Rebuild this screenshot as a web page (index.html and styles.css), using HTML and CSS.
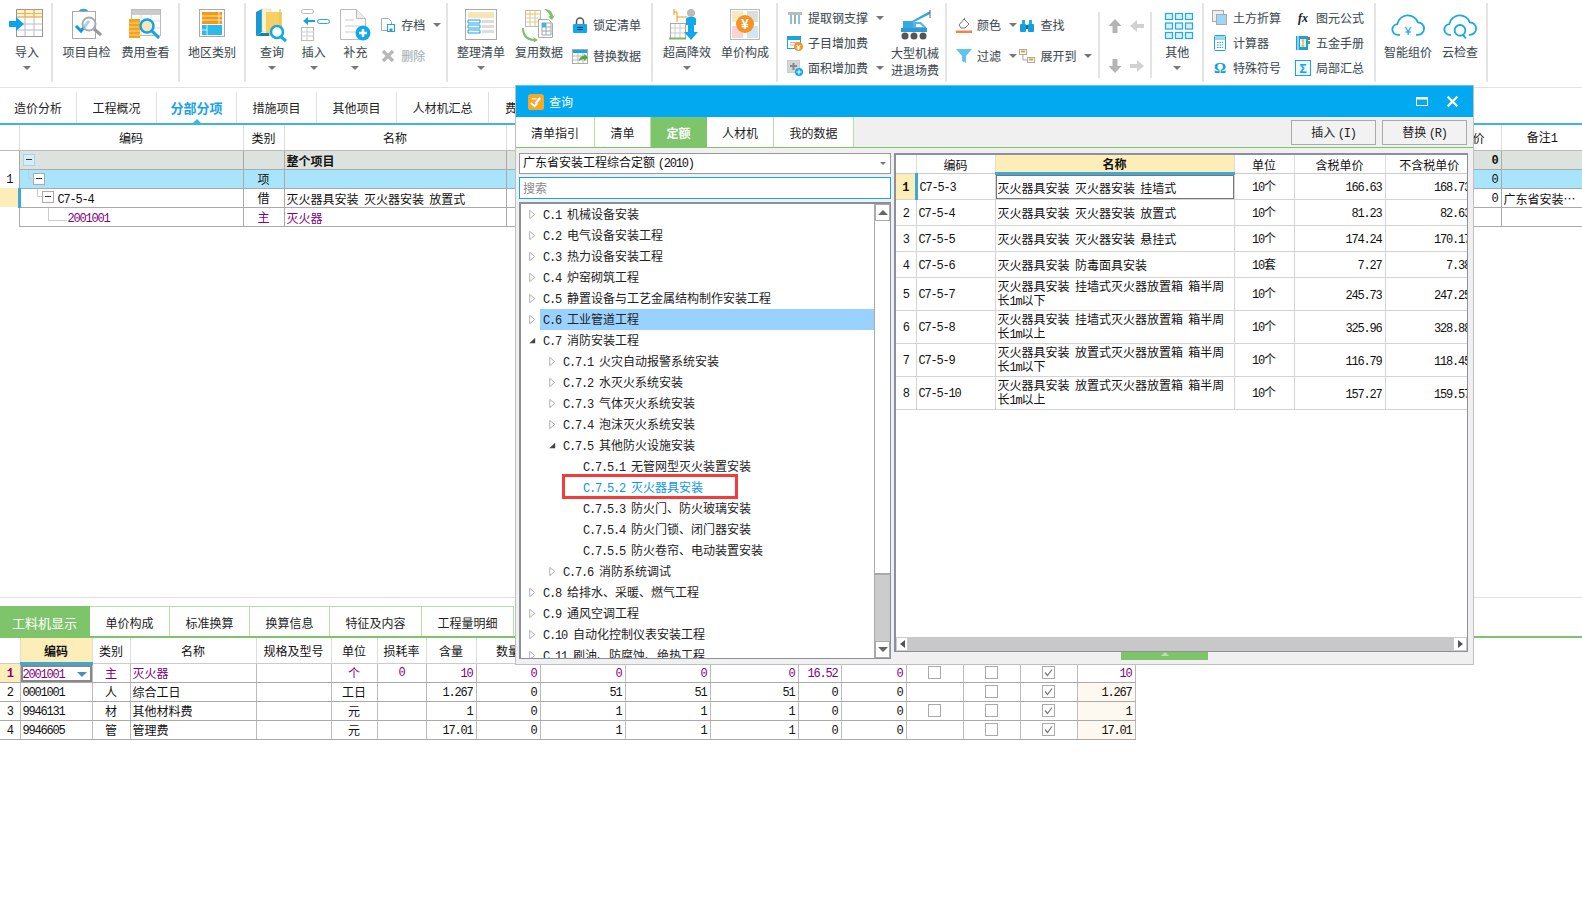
FILE: index.html
```html
<!DOCTYPE html>
<html lang="zh-CN">
<head>
<meta charset="utf-8">
<title>查询</title>
<link rel="stylesheet" href="styles.css">
</head>
<body>
<svg class="sprite" width="0" height="0">
  <symbol id="tri" viewBox="0 0 8 12"><path d="M1.500 1.500 7 6 1.500 10.500Z" fill="#fff" stroke="#aaa"/></symbol>
  <symbol id="open" viewBox="0 0 8 12"><path d="M7.500 3v6H1Z" fill="#444"/></symbol>
  <symbol id="chk" viewBox="0 0 13 13"><rect x=".5" y=".5" width="12" height="12" fill="#fff" stroke="#aaa"/><path d="M3 6.500 5.500 9.500 10 3.500" fill="none" stroke="#777" stroke-width="1.200"/></symbol>
  <symbol id="unchk" viewBox="0 0 13 13"><rect x=".5" y=".5" width="12" height="12" fill="#fff" stroke="#aaa"/></symbol>
</svg>

<header class="toolbar">
  <div class="group g1">
    <div class="big"><svg class="ico" viewBox="0 0 36 34"><rect x="7.500" y="1.500" width="26" height="27" fill="#fff" stroke="#999"/><path d="M8 2h25v7H8z" fill="#fff3cf"/><path d="M8 9h25M16 2v26M25 2v26M8 16h25M8 22h25" stroke="#bbb"/><path d="M8 5.500h25M16 2v7M25 2v7M8 9h25" stroke="#f5b642"/><path d="M0 13h7V9l8 7-8 7v-4H0z" fill="#0aa5ec"/></svg><span class="lb">导入</span><i class="caret"></i></div>
  </div>
  <div class="group g2">
    <div class="big"><svg class="ico" viewBox="0 0 36 34"><rect x="3.500" y="3.500" width="23" height="27" fill="#fff" stroke="#aaa"/><path d="M10 3c1-3 8-3 9 0z" fill="#25a9e6"/><path d="M7 18l5 5 8-10" fill="none" stroke="#0a9be0" stroke-width="3"/><circle cx="20" cy="16" r="6.500" fill="#fff" fill-opacity=".6" stroke="#aaa" stroke-width="2"/><path d="M25 21l7 6" stroke="#999" stroke-width="3"/></svg><span class="lb">项目自检</span></div>
    <div class="big"><svg class="ico" viewBox="0 0 36 34"><rect x="3.500" y="1.500" width="29" height="26" fill="#fff" stroke="#bbb"/><path d="M4 2h28v5H4z" fill="#ccc"/><path d="M4 13h28M4 20h28M13 7v20M23 7v20" stroke="#ddd"/><path d="M1 11h11v19H1z" fill="#f7a21d"/><path d="M1 15h11M1 19h11M1 23h11M1 27h11" stroke="#ffd48a"/><circle cx="19" cy="18" r="6.500" fill="#fde3b8" stroke="#0fa6e8" stroke-width="2.500"/><path d="M24 23l7 7" stroke="#0fa6e8" stroke-width="3"/></svg><span class="lb">费用查看</span></div>
  </div>
  <div class="group g3">
    <div class="big"><svg class="ico" viewBox="0 0 36 34"><rect x="5.500" y="1.500" width="25" height="27" fill="#fff" stroke="#aaa"/><path d="M8 4h20v12H8z" fill="#f79a0e"/><path d="M8 17h20v10H8z" fill="#2cbbe8"/><path d="M25 4v12M8 8h20M8 12h20" stroke="#fff" stroke-width=".800"/><path d="M13 17v10M8 22h5" stroke="#fff" stroke-width=".800"/></svg><span class="lb">地区类别</span></div>
  </div>
  <div class="group g4">
    <div class="big"><svg class="ico" viewBox="0 0 36 34"><path d="M2 4l6-3v23l-6 4z" fill="#1599d6"/><path d="M8 1h9v23H8z" fill="#fff3cc" stroke="#ccc" stroke-width=".500"/><path d="M12 4h16v24H12z" fill="#f7cf62"/><path d="M26 1v25" stroke="#eeb94b"/><path d="M2 28l5-3h8v3z" fill="#0d83bb"/><circle cx="23" cy="24" r="6" fill="#fff" stroke="#12a9ea" stroke-width="2.500"/><path d="M27 29l5 4" stroke="#12a9ea" stroke-width="3"/></svg><span class="lb">查询</span><i class="caret"></i></div>
    <div class="big"><svg class="ico" viewBox="0 0 36 34"><rect x="5.500" y="1.500" width="12" height="4" rx="2" fill="#fff" stroke="#bbb"/><rect x="21.500" y="11.500" width="12" height="4" rx="2" fill="#fff" stroke="#22ace6"/><path d="M19 12v2h-7v3l-5-4 5-4v3z" fill="#12a3e6"/><rect x="5.500" y="19.500" width="12" height="13" fill="#fff" stroke="#bbb"/><path d="M5 24h13M5 28h13M11 19v13" stroke="#ccc"/></svg><span class="lb">插入</span><i class="caret"></i></div>
    <div class="big"><svg class="ico" viewBox="0 0 36 34"><path d="M3.500 1.500h16l9 9v21h-25z" fill="#fff" stroke="#bbb"/><path d="M19.500 1.500v9h9" fill="#eee" stroke="#bbb"/><path d="M8 12h9M8 18h15M8 24h11" stroke="#ddd" stroke-width="1.500"/><circle cx="26" cy="25" r="7.500" fill="#0da9ee"/><path d="M22 25h8M26 21v8" stroke="#fff" stroke-width="2.500"/></svg><span class="lb">补充</span><i class="caret"></i></div>
    <div class="smcol">
      <div class="sm two"><svg class="sic" viewBox="0 0 16 16"><path d="M1.500 1.500h7l3 3v9h-10z" fill="#fff" stroke="#aaa"/><rect x="7.500" y="7.500" width="7" height="7" fill="#fff" stroke="#18a5e2"/><path d="M9.500 11.500h3v3h-3z" fill="#18a5e2"/></svg><span>存档</span><i class="caret side"></i></div>
      <div class="sm two off"><svg class="sic" viewBox="0 0 16 16"><path d="M3 3l10 10M13 3 3 13" stroke="#b8b8b8" stroke-width="3.500"/></svg><span>删除</span></div>
    </div>
  </div>
  <div class="group g5">
    <div class="big"><svg class="ico" viewBox="0 0 36 34"><rect x="2.500" y="1.500" width="31" height="30" fill="#fff" stroke="#aaa"/><path d="M5 4h26v6H5z" fill="#f4e6b6"/><path d="M5 12h12v3H5zM5 17h12v3H5zM5 22h12v3H5z" fill="#fff" stroke="#14a4e0"/><path d="M19 12h12v3H19zM19 17h12v3H19zM19 22h12v3H19z" fill="#ddd"/></svg><span class="lb">整理清单</span><i class="caret"></i></div>
    <div class="big"><svg class="ico" viewBox="0 0 36 34"><rect x="4.500" y="2.500" width="15" height="16" fill="#fff" stroke="#bbb"/><path d="M5 6h14M9 3v15M14 3v15" stroke="#f4bf52"/><path d="M5 10h14M5 14h14" stroke="#ccc"/><path d="M17.500 11.500h10l4 4v14h-14z" fill="#fff" stroke="#aaa"/><path d="M21 15h9v12h-9zM21 19h9M21 23h9M25 15v12" fill="none" stroke="#9aa"/><path d="M21 15h4v4h-4z" fill="#39b3e8"/><path d="M23 1c5 0 8 2 9 7l2-1-3 5-4-3 2-1c-1-3-3-5-6-7" fill="#7cc267"/><path d="M3 20c0 6 3 10 10 11l-1-2 5 3-5 3 1-2c-8 0-12-5-12-13z" fill="#7cc267"/></svg><span class="lb">复用数据</span></div>
    <div class="smcol">
      <div class="sm two"><svg class="sic" viewBox="0 0 16 16"><path d="M4.500 7V4.500a3.500 3.500 0 0 1 7 0V7" fill="none" stroke="#555" stroke-width="1.500"/><rect x="1" y="7" width="14" height="9" rx="1" fill="#0fa9ee"/><path d="M5 10.500h6M5 12.500h6" stroke="#135"/></svg><span>锁定清单</span></div>
      <div class="sm two"><svg class="sic" viewBox="0 0 16 16"><rect x=".5" y="1.500" width="15" height="14" fill="#fff" stroke="#aaa"/><path d="M1 2h14v3H1z" fill="#16a6e2"/><path d="M1 8h14M1 12h14M6 5v10M11 5v10" stroke="#bbb"/><path d="M7 13c0-3 2-5 5-5V6l4 3.500-4 3.500v-2c-2 0-4 1-5 2z" fill="#55a83a"/></svg><span>替换数据</span></div>
    </div>
  </div>
  <div class="group g6">
    <div class="big"><svg class="ico" viewBox="0 0 36 34"><rect x="1.500" y="15.500" width="15" height="15" fill="#fff" stroke="#aaa"/><path d="M2 20h14M2 25h14M6 16v14M11 16v14" stroke="#ccc"/><path d="M0 30.500h17" stroke="#7cb85f" stroke-width="2"/><path d="M8 4v10M5 4h3M5 1v6M8 9h10" stroke="#f29a12" fill="none"/><circle cx="22" cy="5" r="4" fill="#bbb"/><path d="M17 11c0-3 10-3 10 0v6h-10z" fill="#12a8ec"/><path d="M19 17h6v7h4l-7 8-7-8h4z" fill="#12a8ec"/></svg><span class="lb">超高降效</span><i class="caret"></i></div>
    <div class="big"><svg class="ico" viewBox="0 0 36 34"><rect x="3.500" y="1.500" width="29" height="30" fill="#fff" stroke="#bbb"/><path d="M5 3h11v11H5z" fill="#f5e9c0"/><path d="M20 3h11v11H20z" fill="#ddd"/><path d="M5 18h11v12H5z" fill="#f5d5d5"/><path d="M20 18h11v12H20z" fill="#cfe6f3"/><circle cx="18" cy="16" r="9" fill="#f7931e"/><text x="18" y="20.500" text-anchor="middle" class="yen">¥</text></svg><span class="lb">单价构成</span></div>
  </div>
  <div class="group g7">
    <div class="smcol three">
      <div class="sm"><svg class="sic" viewBox="0 0 16 16"><path d="M1 2h14v3H1z" fill="#bbb"/><path d="M3 5h2v9H3zM11 5h2v9h-2z" fill="#7ac6e6"/><path d="M7 5h2v9H7z" fill="#aaa"/></svg><span>提取钢支撑</span><i class="caret side"></i></div>
      <div class="sm"><svg class="sic" viewBox="0 0 16 16"><rect x=".5" y="1.500" width="13" height="12" fill="#fff" stroke="#18a5e2"/><path d="M1 2h12v3H1z" fill="#18a5e2"/><path d="M3 7.500h7M3 10h4" stroke="#bbb"/><circle cx="11.500" cy="11.500" r="4.500" fill="#f7931e"/><text x="11.500" y="14.500" text-anchor="middle" class="yen sm-y">¥</text></svg><span>子目增加费</span></div>
      <div class="sm"><svg class="sic" viewBox="0 0 16 16"><rect x=".5" y=".5" width="12" height="12" fill="#d6d6d6" stroke="#ccc"/><path d="M3 6h7M6.500 3v7" stroke="#888" stroke-width="2"/><circle cx="12" cy="12" r="4" fill="#0da9ee"/><path d="M9.500 12h5M12 9.500v5" stroke="#fff"/></svg><span>面积增加费</span><i class="caret side"></i></div>
    </div>
    <div class="big"><svg class="ico" viewBox="0 0 36 34"><path d="M15 13 33 3v3L17 14z" fill="#2aa8e4"/><path d="M33 2v8" stroke="#666"/><path d="M6 13h10v7H6z" fill="#38a8e2"/><path d="M16 14h8l5 5v5H16z" fill="#58b4e8"/><path d="M19 16h4l3 3h-7z" fill="#fff"/><path d="M4 20h26v4H4z" fill="#2a9ad8"/><circle cx="8" cy="28" r="3.500" fill="#555"/><circle cx="17" cy="28" r="3.500" fill="#555"/><circle cx="26" cy="28" r="3.500" fill="#555"/></svg><span class="lb two-l">大型机械<br>进退场费</span></div>
  </div>
  <div class="group g8">
    <div class="smcol c1">
      <div class="sm two"><svg class="sic" viewBox="0 0 16 16"><path d="M3 8l5-6 5 5-4 4H5z" fill="#fff" stroke="#777"/><path d="M7 3l2-2" stroke="#777"/><path d="M0 13.500h16v2.500H0z" fill="#f4824a"/></svg><span>颜色</span><i class="caret side"></i></div>
      <div class="sm two"><svg class="sic" viewBox="0 0 16 16"><path d="M0 1h16L10 8v7l-4-2V8z" fill="#62c3ee"/></svg><span>过滤</span><i class="caret side"></i></div>
    </div>
    <div class="smcol c2">
      <div class="sm two"><svg class="sic" viewBox="0 0 16 16"><path d="M3 3h3v4H3zM10 3h3v4h-3z" fill="#2aa8e4"/><rect x="1" y="7" width="6" height="8" rx="1" fill="#12a0e0"/><rect x="9" y="7" width="6" height="8" rx="1" fill="#12a0e0"/><path d="M7 8h2v4H7z" fill="#0a6fa8"/></svg><span>查找</span></div>
      <div class="sm two"><svg class="sic" viewBox="0 0 16 16"><rect x=".5" y="1.500" width="7" height="5" fill="#fff" stroke="#aaa"/><rect x="8.500" y="9.500" width="7" height="5" fill="#fff" stroke="#aaa"/><path d="M2 3.500h4M10 11.500h4" stroke="#f29a12" stroke-width="2"/><path d="M4 7v5h4" fill="none" stroke="#aaa"/></svg><span>展开到</span><i class="caret side"></i></div>
    </div>
    <div class="arrows">
      <svg class="ar" viewBox="0 0 16 16"><path d="M8 1l6.500 7H10.500v7h-5V8H1.500z" fill="#b4b4b4"/></svg>
      <svg class="ar" viewBox="0 0 16 16"><path d="M1 8l7-6v4h7v4H8v4z" fill="#d2d2d2"/></svg>
      <svg class="ar" viewBox="0 0 16 16"><path d="M8 15l6.500-7H10.500V1h-5v7H1.500z" fill="#b4b4b4"/></svg>
      <svg class="ar" viewBox="0 0 16 16"><path d="M15 8 8 2v4H1v4h7v4z" fill="#d2d2d2"/></svg>
    </div>
    <div class="big"><svg class="ico" viewBox="-2 -1 36 34"><g fill="#d7f0fb" stroke="#1fa9e6" stroke-width="1.200"><rect x="4.500" y="4.500" width="7" height="6"/><rect x="14.500" y="4.500" width="7" height="6"/><rect x="24.500" y="4.500" width="7" height="6"/><rect x="4.500" y="14" width="7" height="6"/><rect x="14.500" y="14" width="7" height="6"/><rect x="24.500" y="14" width="7" height="6"/><rect x="4.500" y="23.500" width="7" height="6"/><rect x="14.500" y="23.500" width="7" height="6"/><rect x="24.500" y="23.500" width="7" height="6"/></g></svg><span class="lb">其他</span><i class="caret"></i></div>
  </div>
  <div class="group g9">
    <div class="smcol three c3">
      <div class="sm"><svg class="sic" viewBox="0 0 16 16"><rect x=".5" y=".5" width="11" height="11" fill="#eee" stroke="#aaa"/><rect x="4.500" y="4.500" width="10" height="10" fill="#9bd6f2" stroke="#aaa"/></svg><span>土方折算</span></div>
      <div class="sm"><svg class="sic" viewBox="0 0 16 16"><rect x="2.500" y=".5" width="11" height="15" rx="1" fill="#fff" stroke="#18a5e2"/><path d="M3 1h10v4H3z" fill="#9bd6f2"/><path d="M5 7.500h6M5 10h6M5 12.500h6" stroke="#18a5e2" stroke-dasharray="1.500 1"/></svg><span>计算器</span></div>
      <div class="sm"><svg class="sic" viewBox="0 0 16 16"><text x="8" y="13" text-anchor="middle" class="omega">Ω</text></svg><span>特殊符号</span></div>
    </div>
    <div class="smcol three c4">
      <div class="sm"><svg class="sic" viewBox="0 0 16 16"><text x="8" y="12" text-anchor="middle" class="fx">fx</text></svg><span>图元公式</span></div>
      <div class="sm"><svg class="sic" viewBox="0 0 16 16"><rect x="1" y="1" width="12" height="14" fill="#1aa2e0"/><path d="M3 1v14" stroke="#fff"/><path d="M5 4h6v8H5z" fill="#e9f6fc"/><path d="M6.500 5h3M8 5v6M6.500 11h3" stroke="#e8a400"/><path d="M13 2h2v3h-2z" fill="#e8443a"/><path d="M13 6h2v3h-2z" fill="#4caf50"/></svg><span>五金手册</span></div>
      <div class="sm"><svg class="sic" viewBox="0 0 16 16"><rect x=".5" y=".5" width="15" height="15" fill="#eef8fd" stroke="#18a5e2"/><text x="8" y="12.500" text-anchor="middle" class="sigma">Σ</text></svg><span>局部汇总</span></div>
    </div>
  </div>
  <div class="group g10">
    <div class="big"><svg class="ico" viewBox="-2 -5 40 38"><path d="M9 25H7A6 6 0 0 1 6 13 12 12 0 0 1 29 11a7 7 0 0 1 0 14h-2" fill="none" stroke="#19a8e6" stroke-width="2"/><text x="18" y="25" text-anchor="middle" class="cloud-y">¥</text></svg><span class="lb">智能组价</span></div>
    <div class="big"><svg class="ico" viewBox="-2 -5 40 38"><path d="M8 25H7A6 6 0 0 1 6 13 12 12 0 0 1 29 11a7 7 0 0 1 0 14h-1" fill="none" stroke="#19a8e6" stroke-width="2"/><circle cx="18" cy="20" r="6" fill="#fff" stroke="#19a8e6" stroke-width="2"/><path d="M21.500 25l3 4" stroke="#19a8e6" stroke-width="2"/></svg><span class="lb">云检查</span></div>
  </div>
</header>

<nav class="tabs">
  <a class="tab t-first">造价分析</a>
  <a class="tab">工程概况</a>
  <a class="tab on">分部分项</a>
  <a class="tab">措施项目</a>
  <a class="tab">其他项目</a>
  <a class="tab t-wide">人材机汇总</a>
  <a class="tab t-last">费用汇总</a>
</nav>

<section class="main">
  <table class="grid mt">
    <colgroup><col><col><col><col><col><col><col></colgroup>
    <thead>
      <tr><th></th><th>编码</th><th>类别</th><th>名称</th><th></th><th>综合合价</th><th>备注<span class="n">1</span></th></tr>
    </thead>
    <tbody>
      <tr class="r-all"><td class="rn plain"></td><td><span class="box b0"></span></td><td></td><td><b>整个项目</b></td><td></td><td class="num"><b>0</b></td><td></td></tr>
      <tr class="r-sel"><td class="rn plain"><span class="n">1</span></td><td><span class="box b1"></span></td><td class="ce">项</td><td></td><td></td><td class="num">0</td><td></td></tr>
      <tr><td class="rn plain act"></td><td class="cur"><span class="box b2"></span><span class="n">C7-5-4</span></td><td class="ce">借</td><td>灭火器具安装&nbsp;&nbsp;灭火器安装&nbsp;&nbsp;放置式</td><td></td><td class="num">0</td><td>广东省安装…</td></tr>
      <tr class="pu"><td class="rn plain"></td><td><span class="leaf n">2001001</span></td><td class="ce">主</td><td>灭火器</td><td></td><td></td><td></td></tr>
    </tbody>
  </table>
</section>

<section class="lower">
  <nav class="subtabs">
    <a class="st on st-a">工料机显示</a>
    <a class="st">单价构成</a>
    <a class="st">标准换算</a>
    <a class="st">换算信息</a>
    <a class="st st-b">特征及内容</a>
    <a class="st st-b">工程量明细</a>
  </nav>
  <table class="grid bt">
    <colgroup><col><col><col><col><col><col><col><col><col><col><col><col><col><col><col><col><col><col></colgroup>
    <thead>
      <tr><th></th><th class="hl">编码</th><th>类别</th><th>名称</th><th>规格及型号</th><th>单位</th><th>损耗率</th><th>含量</th><th>数量</th><th></th><th></th><th></th><th></th><th></th><th></th><th></th><th></th><th></th></tr>
    </thead>
    <tbody>
      <tr class="pu"><td class="rn act"><b class="n">1</b></td><td class="cellsel"><span class="n">2001001</span><i class="dd"></i></td><td class="ce">主</td><td>灭火器</td><td></td><td class="ce">个</td><td class="ce n">0</td><td class="num">10</td><td class="num">0</td><td class="num">0</td><td class="num">0</td><td class="num">0</td><td class="num">16.52</td><td class="num">0</td><td class="ce"><svg class="cb"><use href="#unchk"/></svg></td><td class="ce"><svg class="cb"><use href="#unchk"/></svg></td><td class="ce"><svg class="cb"><use href="#chk"/></svg></td><td class="num">10</td></tr>
      <tr><td class="rn"><span class="n">2</span></td><td><span class="n">0001001</span></td><td class="ce">人</td><td>综合工日</td><td></td><td class="ce">工日</td><td></td><td class="num">1.267</td><td class="num">0</td><td class="num">51</td><td class="num">51</td><td class="num">51</td><td class="num">0</td><td class="num">0</td><td></td><td class="ce"><svg class="cb"><use href="#unchk"/></svg></td><td class="ce"><svg class="cb"><use href="#chk"/></svg></td><td class="num tint">1.267</td></tr>
      <tr><td class="rn"><span class="n">3</span></td><td><span class="n">9946131</span></td><td class="ce">材</td><td>其他材料费</td><td></td><td class="ce">元</td><td></td><td class="num">1</td><td class="num">0</td><td class="num">1</td><td class="num">1</td><td class="num">1</td><td class="num">0</td><td class="num">0</td><td class="ce"><svg class="cb"><use href="#unchk"/></svg></td><td class="ce"><svg class="cb"><use href="#unchk"/></svg></td><td class="ce"><svg class="cb"><use href="#chk"/></svg></td><td class="num tint">1</td></tr>
      <tr><td class="rn"><span class="n">4</span></td><td><span class="n">9946605</span></td><td class="ce">管</td><td>管理费</td><td></td><td class="ce">元</td><td></td><td class="num">17.01</td><td class="num">0</td><td class="num">1</td><td class="num">1</td><td class="num">1</td><td class="num">0</td><td class="num">0</td><td></td><td class="ce"><svg class="cb"><use href="#unchk"/></svg></td><td class="ce"><svg class="cb"><use href="#chk"/></svg></td><td class="num tint">17.01</td></tr>
    </tbody>
  </table>
</section>

<aside class="dialog">
  <div class="dlg-head">
    <svg class="dlg-ico" viewBox="0 0 17 17"><rect width="17" height="17" rx="3" fill="#f7a826"/><path d="M3 9.500l4 3.500 3-3" fill="none" stroke="#fff" stroke-width="2"/><path d="M8 10l5-6" stroke="#fff" stroke-width="2.500"/><path d="M4 5h5" stroke="#fff" stroke-width="1.500"/></svg>
    <span class="dlg-title">查询</span>
    <svg class="dlg-btn" viewBox="0 0 12 12"><rect x=".5" y="1.500" width="11" height="8" fill="none" stroke="#fff"/><path d="M1 2.500h10" stroke="#fff" stroke-width="2"/></svg>
    <svg class="dlg-btn close" viewBox="0 0 12 12"><path d="M1.500 1.500l9 9M10.500 1.500l-9 9" stroke="#fff" stroke-width="2"/></svg>
  </div>
  <div class="dlg-tabs">
    <a class="dt w79">清单指引</a>
    <a class="dt w56">清单</a>
    <a class="dt w57 on">定额</a>
    <a class="dt w67">人材机</a>
    <a class="dt w80">我的数据</a>
    <button class="dbtn b-ins">插入 <span class="n">(I)</span></button>
    <button class="dbtn">替换 <span class="n">(R)</span></button>
  </div>
  <div class="dlg-body">
    <div class="leftcol">
      <div class="combo"><span>广东省安装工程综合定额 <span class="n">(2010)</span></span><i class="caret"></i></div>
      <div class="search">搜索</div>
      <div class="treebox">
        <ul class="tree">
          <li class="l0"><svg class="ar8"><use href="#tri"/></svg><span class="lab"><span class="n">C.1</span><em>机械设备安装</em></span></li>
          <li class="l0"><svg class="ar8"><use href="#tri"/></svg><span class="lab"><span class="n">C.2</span><em>电气设备安装工程</em></span></li>
          <li class="l0"><svg class="ar8"><use href="#tri"/></svg><span class="lab"><span class="n">C.3</span><em>热力设备安装工程</em></span></li>
          <li class="l0"><svg class="ar8"><use href="#tri"/></svg><span class="lab"><span class="n">C.4</span><em>炉窑砌筑工程</em></span></li>
          <li class="l0"><svg class="ar8"><use href="#tri"/></svg><span class="lab"><span class="n">C.5</span><em>静置设备与工艺金属结构制作安装工程</em></span></li>
          <li class="l0"><svg class="ar8"><use href="#tri"/></svg><span class="lab hi"><span class="n">C.6</span><em>工业管道工程</em></span></li>
          <li class="l0"><svg class="ar8"><use href="#open"/></svg><span class="lab"><span class="n">C.7</span><em>消防安装工程</em></span></li>
          <li class="l1"><svg class="ar8"><use href="#tri"/></svg><span class="lab"><span class="n">C.7.1</span><em>火灾自动报警系统安装</em></span></li>
          <li class="l1"><svg class="ar8"><use href="#tri"/></svg><span class="lab"><span class="n">C.7.2</span><em>水灭火系统安装</em></span></li>
          <li class="l1"><svg class="ar8"><use href="#tri"/></svg><span class="lab"><span class="n">C.7.3</span><em>气体灭火系统安装</em></span></li>
          <li class="l1"><svg class="ar8"><use href="#tri"/></svg><span class="lab"><span class="n">C.7.4</span><em>泡沫灭火系统安装</em></span></li>
          <li class="l1"><svg class="ar8"><use href="#open"/></svg><span class="lab"><span class="n">C.7.5</span><em>其他防火设施安装</em></span></li>
          <li class="l2"><span class="ar8"></span><span class="lab"><span class="n">C.7.5.1</span><em>无管网型灭火装置安装</em></span></li>
          <li class="l2 picked"><span class="ar8"></span><span class="lab"><span class="n">C.7.5.2</span><em>灭火器具安装</em></span><i class="redbox"></i></li>
          <li class="l2"><span class="ar8"></span><span class="lab"><span class="n">C.7.5.3</span><em>防火门、防火玻璃安装</em></span></li>
          <li class="l2"><span class="ar8"></span><span class="lab"><span class="n">C.7.5.4</span><em>防火门锁、闭门器安装</em></span></li>
          <li class="l2"><span class="ar8"></span><span class="lab"><span class="n">C.7.5.5</span><em>防火卷帘、电动装置安装</em></span></li>
          <li class="l1"><svg class="ar8"><use href="#tri"/></svg><span class="lab"><span class="n">C.7.6</span><em>消防系统调试</em></span></li>
          <li class="l0"><svg class="ar8"><use href="#tri"/></svg><span class="lab"><span class="n">C.8</span><em>给排水、采暖、燃气工程</em></span></li>
          <li class="l0"><svg class="ar8"><use href="#tri"/></svg><span class="lab"><span class="n">C.9</span><em>通风空调工程</em></span></li>
          <li class="l0"><svg class="ar8"><use href="#tri"/></svg><span class="lab"><span class="n">C.10</span><em>自动化控制仪表安装工程</em></span></li>
          <li class="l0"><svg class="ar8"><use href="#tri"/></svg><span class="lab"><span class="n">C.11</span><em>刷油、防腐蚀、绝热工程</em></span></li>
        </ul>
        <div class="vbar">
          <span class="sbtn"><i class="up"></i></span>
          <span class="thumb"></span>
          <span class="track"></span>
          <span class="sbtn"><i class="down"></i></span>
        </div>
      </div>
    </div>
    <div class="rightcol">
      <div class="qbox">
        <div class="qscroll">
          <table class="grid qt">
            <colgroup><col><col><col><col><col><col></colgroup>
            <thead><tr><th></th><th>编码</th><th class="hl">名称</th><th>单位</th><th>含税单价</th><th>不含税单价</th></tr></thead>
            <tbody>
              <tr><td class="rn act"><b class="n">1</b></td><td class="cur"><span class="n">C7-5-3</span></td><td class="cellsel2">灭火器具安装&nbsp;&nbsp;灭火器安装&nbsp;&nbsp;挂墙式</td><td class="ce"><span class="n">10</span>个</td><td class="num">166.63</td><td class="num">168.73</td></tr>
              <tr><td class="rn"><span class="n">2</span></td><td><span class="n">C7-5-4</span></td><td>灭火器具安装&nbsp;&nbsp;灭火器安装&nbsp;&nbsp;放置式</td><td class="ce"><span class="n">10</span>个</td><td class="num">81.23</td><td class="num">82.63</td></tr>
              <tr><td class="rn"><span class="n">3</span></td><td><span class="n">C7-5-5</span></td><td>灭火器具安装&nbsp;&nbsp;灭火器安装&nbsp;&nbsp;悬挂式</td><td class="ce"><span class="n">10</span>个</td><td class="num">174.24</td><td class="num">170.17</td></tr>
              <tr><td class="rn"><span class="n">4</span></td><td><span class="n">C7-5-6</span></td><td>灭火器具安装&nbsp;&nbsp;防毒面具安装</td><td class="ce"><span class="n">10</span>套</td><td class="num">7.27</td><td class="num">7.38</td></tr>
              <tr class="tall"><td class="rn"><span class="n">5</span></td><td><span class="n">C7-5-7</span></td><td>灭火器具安装&nbsp;&nbsp;挂墙式灭火器放置箱&nbsp;&nbsp;箱半周<br>长<span class="n">1m</span>以下</td><td class="ce"><span class="n">10</span>个</td><td class="num">245.73</td><td class="num">247.25</td></tr>
              <tr class="tall"><td class="rn"><span class="n">6</span></td><td><span class="n">C7-5-8</span></td><td>灭火器具安装&nbsp;&nbsp;挂墙式灭火器放置箱&nbsp;&nbsp;箱半周<br>长<span class="n">1m</span>以上</td><td class="ce"><span class="n">10</span>个</td><td class="num">325.96</td><td class="num">328.88</td></tr>
              <tr class="tall"><td class="rn"><span class="n">7</span></td><td><span class="n">C7-5-9</span></td><td>灭火器具安装&nbsp;&nbsp;放置式灭火器放置箱&nbsp;&nbsp;箱半周<br>长<span class="n">1m</span>以下</td><td class="ce"><span class="n">10</span>个</td><td class="num">116.79</td><td class="num">118.45</td></tr>
              <tr class="tall"><td class="rn"><span class="n">8</span></td><td><span class="n">C7-5-10</span></td><td>灭火器具安装&nbsp;&nbsp;放置式灭火器放置箱&nbsp;&nbsp;箱半周<br>长<span class="n">1m</span>以上</td><td class="ce"><span class="n">10</span>个</td><td class="num">157.27</td><td class="num">159.57</td></tr>
            </tbody>
          </table>
        </div>
        <div class="hbar">
          <span class="hbtn"><i class="lf"></i></span>
          <span class="htrack"></span>
          <span class="hbtn"><i class="rt"></i></span>
        </div>
      </div>
      <div class="grip"><i></i></div>
    </div>
  </div>
</aside>
</body>
</html>
```

FILE: styles.css
```css
*{box-sizing:border-box}
html,body{margin:0;padding:0}
body{width:1582px;height:923px;overflow:hidden;background:#fff;color:#111;font:12px/16px "Noto Sans CJK SC","Liberation Sans",sans-serif;position:relative}
.sprite{position:absolute}
.n{font-family:"Liberation Mono","Noto Sans CJK SC",monospace;letter-spacing:-1.2px;font-size:12px}
em{font-style:normal}
a{display:block}

/* ribbon */
.toolbar{display:flex;height:88px;border-bottom:1px solid #e2e2e2;padding-top:3px;color:#4a4a4a}
.group{display:flex;height:79px;border-right:2px solid #e4e4e4;text-shadow:0 0 1px rgba(110,180,225,.35)}
.g1{width:53px;padding-left:3px}
.g1 .big{width:50px}
.g2{width:127px;padding-left:4px}
.g2 .big{width:59px}
.g3{width:66px}
.g3 .big{width:66px}
.g4{width:202px;padding-left:5px}
.g4 .big{width:42px}
.g4 .smcol{margin-left:4px;width:66px}
.g5{width:205px;padding-left:4px}
.g5 .big{width:58px}
.g5 .smcol{margin-left:4px}
.g6{width:125px;padding-left:5px}
.g6 .big{width:58px}
.g7{width:169px;padding-left:9px}
.g7 .smcol{width:98px}
.g7 .big{width:60px}
.g8{width:257px;padding-left:9px}
.c1{width:64px}
.c2{width:79px}
.g8 .big{width:50px}
.g9{width:172px;padding-left:8px}
.c3{width:83px}
.c4{width:70px}
.g10{width:112px;padding-left:6px}
.g10 .big{width:53px}
.big{display:flex;flex-direction:column;align-items:center;padding-top:5px}
.ico{width:36px;height:34px;display:block}
.lb{margin-top:2px;white-space:nowrap;line-height:16px}
.two-l{line-height:17px}
.caret{display:block;width:0;height:0;border-left:4px solid transparent;border-right:4px solid transparent;border-top:4px solid #777;margin-top:6px}
.caret.side{margin:0 0 0 3px}
.smcol{display:flex;flex-direction:column;padding-top:6px}
.smcol.three{padding-top:2px}
.sm{display:flex;align-items:center;gap:5px;height:25px;white-space:nowrap}
.sm.two{height:31px}
.off{color:#b0b0b0}
.sic{width:16px;height:16px;flex:none;overflow:visible}
.arrows{width:55px;border-left:2px solid #e4e4e4;border-right:2px solid #e4e4e4;height:66px;margin-top:9px;display:grid;grid-template-columns:1fr 1fr;align-content:space-between;justify-items:center;padding:6px 2px 4px 4px}
.ar{width:16px;height:16px}
.yen{font:bold 14px "Liberation Sans",sans-serif;fill:#fff}
.sm-y{font-size:8px}
.omega{font:bold 15px "Liberation Serif",serif;fill:#0f9fe0}
.fx{font:italic bold 12px "Liberation Serif",serif;fill:#222}
.sigma{font:bold 12px "Liberation Sans",sans-serif;fill:#18a5e2}
.cloud-y{font:13px "Liberation Sans",sans-serif;fill:#19a8e6}

/* sheet tabs */
.tabs{display:flex;height:37px;padding-top:4px;border-bottom:2px solid #3db5e4;overflow:hidden}
.tab{width:80px;height:31px;line-height:32px;text-align:center;border-right:1px solid #e0e0e0;color:#222;flex:none}
.t-first{width:77px}
.t-wide{width:92px}
.t-last{width:80px;border-right:0}
.tab.on{color:#18a3ea;font-weight:bold;font-size:13px;position:relative}
.tab.on::after{content:"";position:absolute;left:50%;bottom:0;margin-left:-4px;border:4px solid transparent;border-top:0;border-bottom:4px solid #3db5e4}

/* grids */
.grid{border-collapse:collapse;table-layout:fixed;background:#fff}
.grid th{font-weight:normal;text-align:center;padding:2px 0 0;overflow:hidden;white-space:nowrap}
.grid td{padding:0 2px;overflow:hidden;white-space:nowrap}
.grid td.num{padding-top:3px}
.num{text-align:right;font-family:"Liberation Mono","Noto Sans CJK SC",monospace;letter-spacing:-1.2px;padding-right:3px!important}
.ce{text-align:center;padding:0!important}
.rn{text-align:center;padding:0!important}
.act{background:#fdedb8}
.pu td{color:#800080}
.hl{background:#fdedb8;font-weight:bold!important;border-bottom:3px solid #3da9d8!important}

/* main */
.main{height:472px}
.mt{width:1582px}
.mt col:nth-child(1){width:19px}
.mt col:nth-child(2){width:224px}
.mt col:nth-child(3){width:41px}
.mt col:nth-child(4){width:222px}
.mt col:nth-child(5){width:914px}
.mt col:nth-child(6){width:81px}
.mt col:nth-child(7){width:81px}
.mt th{height:25px;border-left:1px solid #ddd;border-bottom:1px solid #bbb}
.mt th:first-child{border-left:0}
.mt td{height:19px;border:1px solid #aaa;line-height:14px;padding-top:2px}
.mt td.plain{border:0}
.mt td:last-child{border-right:0}
.r-all td:not(.plain){background:#dce2dd}
.r-sel td:not(.plain){background:#a9e5fa}
.cur{border-left:3px solid #3da9d8!important}
.box{display:inline-block;position:relative;width:12px;height:12px;border:1px solid #aaa;background:#fff;vertical-align:top}
.box::after{content:"";position:absolute;left:2px;top:4px;width:6px;height:1px;background:#333}
.b0{margin-left:1px;background:#d5eef8;border-color:#a8d4e4}
.b1{margin-left:11px}
.b1::before,.b2::before{content:"";position:absolute;left:-6px;top:-10px;width:6px;height:14px;border-left:1px solid #ccc;border-bottom:1px solid #ccc}
.b2{margin:0 4px 0 19px}
.leaf{display:inline-block;position:relative;margin-left:46px}
.leaf::before{content:"";position:absolute;left:-20px;top:-8px;width:18px;height:16px;border-left:1px solid #ccc;border-bottom:1px solid #ccc}

/* lower */
.lower::before{content:"";display:block;height:1px;background:#e2e2e2}
.subtabs{display:flex;margin-top:8px;height:32px;border-bottom:2px solid #7ec46a}
.st{width:80px;height:30px;line-height:31px;text-align:center;border-top:1px solid #b5e3a5;border-right:1px solid #b5e3a5;color:#222;flex:none}
.st-a{width:90px}
.st-b{width:92px}
.st.on{background:#7ec46a;color:#fff;border-color:#7ec46a;font-size:13px}
.bt{width:1134px}
.bt col:nth-child(1){width:20px}
.bt col:nth-child(2){width:72px}
.bt col:nth-child(3){width:38px}
.bt col:nth-child(4){width:126px}
.bt col:nth-child(5){width:75px}
.bt col:nth-child(6){width:46px}
.bt col:nth-child(7){width:49px}
.bt col:nth-child(8){width:50px}
.bt col:nth-child(9){width:64px}
.bt col:nth-child(10){width:85px}
.bt col:nth-child(11){width:85px}
.bt col:nth-child(12){width:88px}
.bt col:nth-child(13){width:43px}
.bt col:nth-child(14){width:65px}
.bt col:nth-child(15){width:57px}
.bt col:nth-child(16){width:57px}
.bt col:nth-child(17){width:57px}
.bt col:nth-child(18){width:58px}
.bt th{height:25px;border-left:1px solid #ddd;border-bottom:1px solid #ccc}
.bt th:first-child{border-left:0}
.bt td{height:19px;border-left:1px solid #bbb;border-bottom:1px solid #aaa;line-height:14px;padding-top:1px}
.bt td:last-child{border-right:1px solid #bbb}
.bt td:first-child{border-left:0}
.cellsel{position:relative;box-shadow:inset 0 0 0 2px #888,inset 2px 2px 0 #3da9d8;padding-left:2px}
.dd{position:absolute;right:5px;top:7px;border:5px solid transparent;border-top:5px solid #4a8fc0;border-bottom:0}
.cb{width:13px;height:13px;display:block;margin:0 auto}
.tint{background:#fdf8f0}

/* dialog */
.dialog{position:absolute;left:515px;top:85px;width:959px;height:580px;background:#f0f0f0;border:1px solid #c0c0c0;border-top:0;display:flex;flex-direction:column}
.dlg-head{height:32px;background:#03a9f0;display:flex;align-items:center;color:#fff;padding:0 14px 0 12px;border-top:1px solid #5cc5f2}
.dlg-ico{width:16px;height:16px;flex:none}
.dlg-title{margin-left:5px;flex:1}
.dlg-btn{width:12px;height:12px;flex:none;margin-left:18px}
.dlg-btn.close{width:13px;height:13px}
.dlg-tabs{display:flex;height:31px;border-bottom:1px solid #7ec46a;align-items:flex-start;flex:none}
.dt{height:30px;line-height:31px;text-align:center;border-right:1px solid #b5e3a5;color:#222;flex:none;background:#fff}
.w79{width:79px}
.w56{width:56px}
.w57{width:56px}
.w67{width:67px}
.w80{width:80px}
.dt.on{background:#7ec46a;color:#fff;font-weight:bold;border-color:#7ec46a}
.dbtn{width:85px;height:25px;margin:3px 6px 0 0;padding:0;border:1px solid #aaa;background:#f2f2f2;font:12px/16px "Noto Sans CJK SC",sans-serif;color:#222}
.b-ins{margin-left:auto}
.dlg-body{flex:1;display:flex;gap:3px;padding:5px 5px 0 3px;min-height:0}
.leftcol{width:372px;flex:none;display:flex;flex-direction:column}
.combo{height:21px;background:#fff;border:1px solid #999;display:flex;align-items:center;justify-content:space-between;padding:0 4px 2px 3px}
.combo .caret{margin:2px 0 0;border-width:3px 3px 0}
.search{height:22px;margin-top:3px;background:#fff;border:1px solid #14a8ea;color:#888;padding:2px 3px;flex:none}
.treebox{height:457px;margin-top:3px;background:#fff;border:2px solid #8d9099;border-right-width:1px;border-bottom-width:1px;display:flex;overflow:hidden;flex:none}
.tree{list-style:none;margin:0;padding:0;flex:1;min-width:0}
.tree li{height:21px;display:flex;align-items:stretch;position:relative;color:#222}
.ar8{width:19px;flex:none;display:block;height:21px;padding:5px 4px 5px 7px}
.l1{padding-left:20px}
.l2{padding-left:40px}
.lab{flex:1;padding-left:3px;line-height:20px;white-space:nowrap}
.lab em{margin-left:6px}
.hi{background:#99d1ff}
.picked{color:#0a96ee!important}
.redbox{position:absolute;left:41px;top:-3px;width:176px;height:25px;border:3px solid #f33c3c}
.vbar{width:16px;flex:none;display:flex;flex-direction:column;background:#ccc;border-left:1px solid #aaa}
.sbtn{height:17px;background:#fff;border:1px solid #aaa;display:flex;align-items:center;justify-content:center;flex:none}
.up{border:5px solid transparent;border-top:0;border-bottom:5px solid #666}
.down{border:5px solid transparent;border-bottom:0;border-top:5px solid #666}
.thumb{height:354px;background:#fff;border-bottom:2px solid #aaa;flex:none}
.track{flex:1}
.rightcol{flex:1;min-width:0;display:flex;flex-direction:column;height:507px;position:relative}
.qbox{height:499px;border:2px solid #8d9099;border-right-width:1px;border-bottom-width:1px;background:#fff;display:flex;flex-direction:column;flex:none}
.qscroll{flex:1;overflow:hidden;min-height:0}
.qt{width:577px}
.qt col:nth-child(1){width:20px}
.qt col:nth-child(2){width:79px}
.qt col:nth-child(3){width:239px}
.qt col:nth-child(4){width:60px}
.qt col:nth-child(5){width:91px}
.qt col:nth-child(6){width:88px}
.qt th{height:18px;border-left:1px solid #ddd;border-bottom:1px solid #ccc;line-height:16px;padding-top:1px}
.qt th:first-child{border-left:0}
.qt td{height:26px;border-left:1px solid #d4d4d4;border-bottom:1px solid #d4d4d4;line-height:15px}
.qt td:first-child{border-left:0}
.qt .tall td{height:33px;line-height:14px}
.cellsel2{box-shadow:inset 0 0 0 1px #777,inset -1px -1px 0 #777}
.hbar{height:14px;display:flex;background:#c8c8c8;flex:none}
.hbtn{width:12px;background:#fff;display:flex;align-items:center;justify-content:center;flex:none;border:1px solid #ccc}
.hbtn:last-child{width:14px}
.htrack{flex:1}
.lf{border:4px solid transparent;border-left:0;border-right:5px solid #555}
.rt{border:4px solid transparent;border-right:0;border-left:5px solid #555}
.grip{width:87px;height:8px;margin:0 0 0 227px;background:#7ec46a;flex:none;display:flex;justify-content:center}
.grip i{border:4px solid transparent;border-top:0;border-bottom:4px solid #b9e0ab;height:0}
```
